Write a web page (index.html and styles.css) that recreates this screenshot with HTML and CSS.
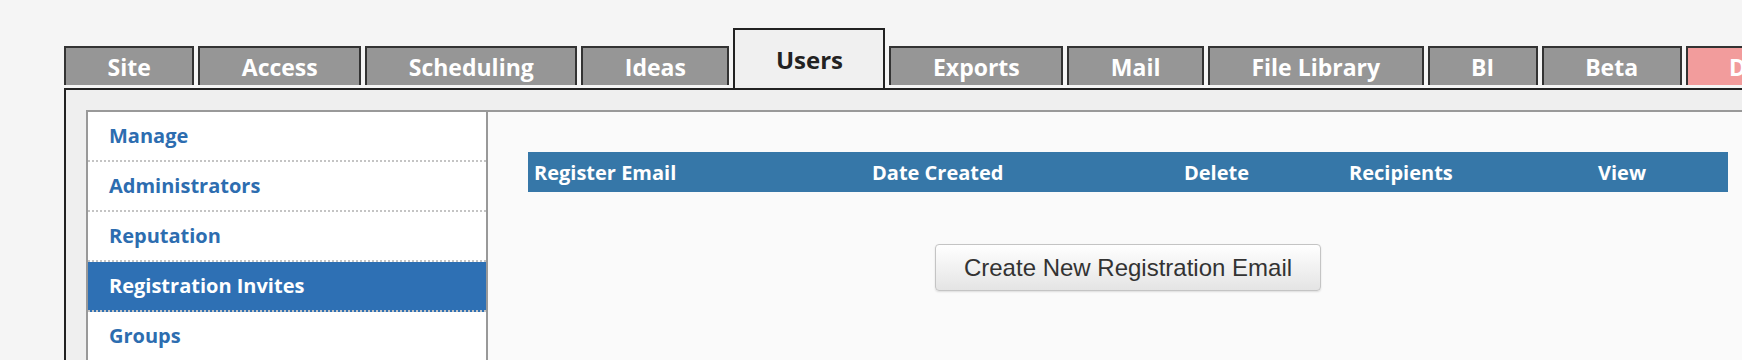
FILE: index.html
```html
<!DOCTYPE html>
<html lang="en">
<head>
    <meta charset="UTF-8">
    <meta name="viewport" content="width=device-width, initial-scale=1.0">
    <title>Users - Registration Invites</title>
    <link rel="stylesheet" href="styles.css">
</head>
<body>

    <div class="page">
        <ul class="tabs">
            <li class="tab">Site</li>
            <li class="tab">Access</li>
            <li class="tab">Scheduling</li>
            <li class="tab">Ideas</li>
            <li class="tab active">Users</li>
            <li class="tab">Exports</li>
            <li class="tab">Mail</li>
            <li class="tab">File Library</li>
            <li class="tab">BI</li>
            <li class="tab">Beta</li>
            <li class="tab danger">Dev</li>
        </ul>

        <div class="panel">
            <div class="inner">
                <ul class="sidenav">
                    <li><a href="#">Manage</a></li>
                    <li><a href="#">Administrators</a></li>
                    <li><a href="#">Reputation</a></li>
                    <li class="selected"><a href="#">Registration Invites</a></li>
                    <li><a href="#">Groups</a></li>
                </ul>

                <div class="main">
                    <table class="invites">
                        <thead>
                            <tr>
                                <th class="col-email">Register Email</th>
                                <th class="col-date">Date Created</th>
                                <th class="col-delete">Delete</th>
                                <th class="col-recipients">Recipients</th>
                                <th class="col-view">View</th>
                            </tr>
                        </thead>
                        <tbody></tbody>
                    </table>

                    <div class="actions">
                        <button type="button">Create New Registration Email</button>
                    </div>
                </div>
            </div>
        </div>
    </div>

</body>
</html>
```

FILE: styles.css
```css
html, body {
    overflow: hidden;
}
body {
    font-family: "Open Sans", "Liberation Sans", sans-serif;
    background-color: #f5f5f5;
    color: #333;
    margin: 0;
}
.page {
    width: 1728px;
    padding: 28px 0 0 64px;
}

/* top tabs */
.tabs {
    display: flex;
    align-items: flex-end;
    gap: 4px;
    list-style: none;
    margin: 0;
    padding: 0;
}
.tab {
    display: flex;
    align-items: center;
    flex: none;
    height: 37px;
    margin-bottom: 3px;
    padding: 0 41.5px;
    border: 2px solid #333;
    border-bottom: none;
    background-color: #969696;
    color: #fff;
    font-size: 23px;
    font-weight: 700;
    white-space: nowrap;
}
.tab.active {
    height: 58px;
    margin-bottom: 0;
    padding: 0 40.5px;
    border-color: #222;
    background-color: #f0f0f0;
    color: #222;
    font-size: 24px;
}
.tab.danger {
    background-color: #f29c9c;
}

/* content */
.panel {
    border: 2px solid #222;
    background-color: #efefef;
    padding: 20px;
    height: 400px;
}
.inner {
    display: flex;
    border: 2px solid #999;
    height: 100%;
    box-sizing: border-box;
}
.sidenav {
    flex: 0 0 398px;
    list-style: none;
    margin: 0;
    padding: 0;
    background: white;
    border-right: 2px solid #999;
}
.sidenav li {
    border-bottom: 2px dotted #c4c4c4;
}
.sidenav a {
    display: block;
    height: 48px;
    line-height: 48px;
    padding-left: 21px;
    color: #2d6db0;
    font-size: 20px;
    font-weight: 700;
    text-decoration: none;
}
.sidenav li.selected {
    background-color: #2e70b4;
}
.sidenav li.selected a {
    color: white;
}

.main {
    flex: 1;
    padding: 40px;
    background-color: #fafafa;
}
.invites {
    width: 1200px;
    border-collapse: collapse;
}
.invites th {
    height: 40px;
    padding: 0 6px;
    background-color: #3677a8;
    color: white;
    font-size: 20px;
    font-weight: 700;
    text-align: left;
    white-space: nowrap;
}
.col-email { width: 326px; }
.col-date { width: 300px; }
.col-delete { width: 153px; }
.col-recipients { width: 237px; }

.actions {
    margin-top: 52px;
    text-align: center;
}
.actions button {
    height: 47px;
    padding: 0 28px;
    border: 1px solid #c4c4c4;
    border-radius: 4px;
    background: linear-gradient(#ffffff, #e4e4e4);
    box-shadow: 0 1px 2px rgba(0,0,0,0.12);
    color: #333;
    font-family: "Liberation Sans", Arial, sans-serif;
    font-size: 24px;
    cursor: pointer;
}
.actions button:hover {
    background: linear-gradient(#f6f6f6, #dcdcdc);
}
```
